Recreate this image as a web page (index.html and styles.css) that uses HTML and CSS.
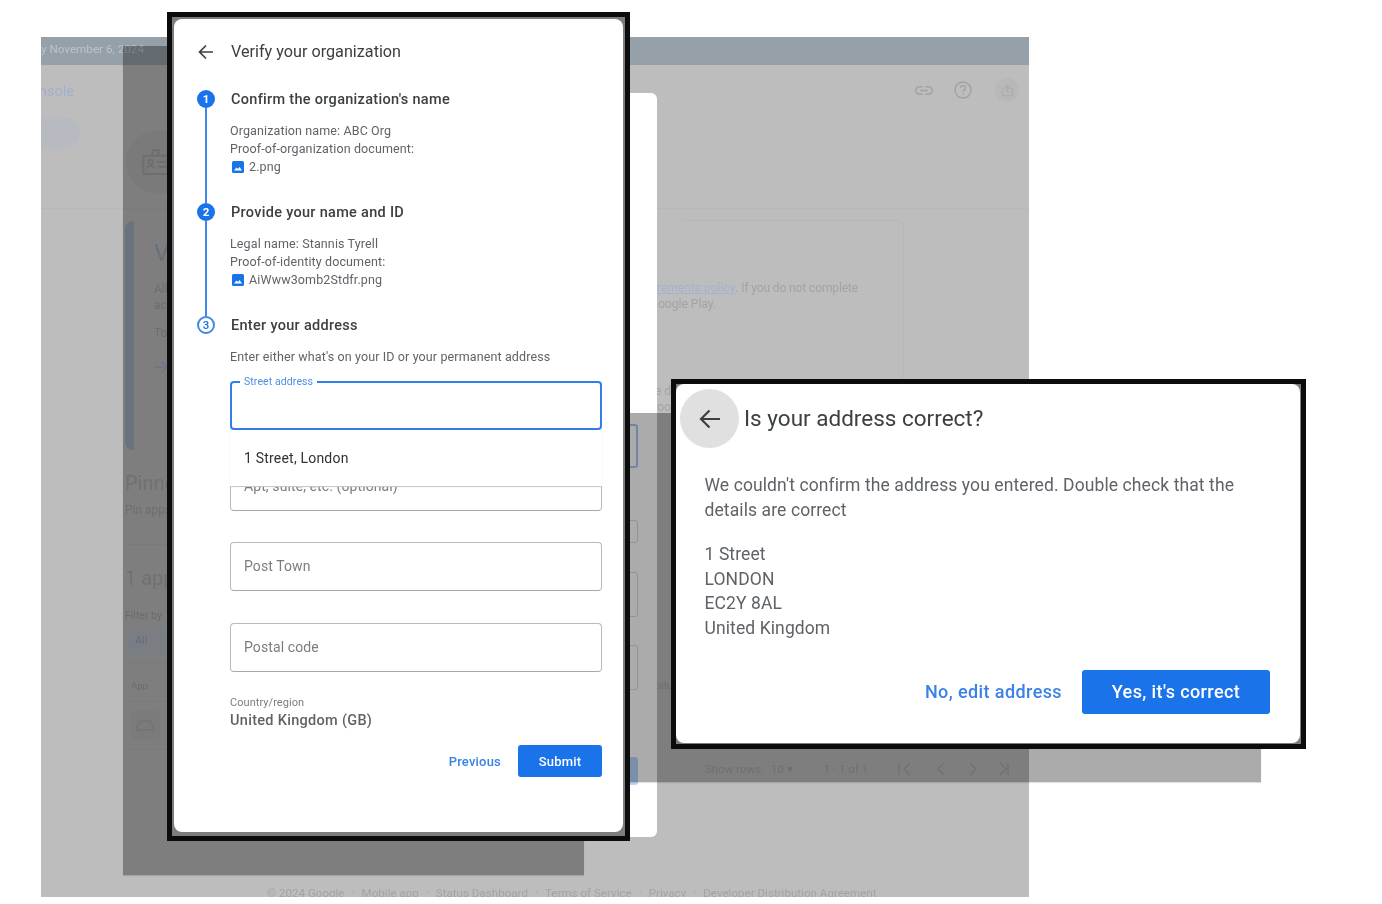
FILE: index.html
```html
<!DOCTYPE html>
<html lang="en">
<head>
<meta charset="utf-8">
<title>Verify your organization</title>
<link rel="stylesheet" href="styles.css">
</head>
<body>
<main class="stage">
  <section class="console">
    <div class="topbar"><span class="date">Verify by November 6, 2024</span></div>
    <div class="brand">Play Console</div>
    <div class="pill"></div>
    <div class="divider"></div>
    <div class="top-icons">
      <svg class="ti-link" viewBox="0 0 24 14" width="18" height="11"><path d="M10 2H6a5 5 0 0 0 0 10h4M14 2h4a5 5 0 0 1 0 10h-4M7 7h10" fill="none" stroke="#a2a2a2" stroke-width="2"/></svg>
      <svg class="ti-help" viewBox="0 0 18 18" width="18" height="18"><circle cx="9" cy="9" r="8" fill="none" stroke="#a2a2a2" stroke-width="1.4"/><path d="M6.6 7a2.4 2.4 0 1 1 3.6 2.1c-.8.5-1.2.9-1.2 1.9M9 12.6v1.2" fill="none" stroke="#a2a2a2" stroke-width="1.4"/></svg>
      <span class="ti-share"><svg viewBox="0 0 14 14" width="13" height="13"><path d="M1.5 4.500h11v8h-11zM7 9V1M5 3l2-2 2 2" fill="none" stroke="#adadad" stroke-width="1.3"/></svg></span>
    </div>
    <div class="org-avatar"><svg viewBox="0 0 28 30" width="27" height="30"><path d="M1.5 8.500h25v19h-25zM11 8.500V2.500h6v6M5 22c1-4 7-4 8 0M16 15h9M16 20h9" fill="none" stroke="#a4a4a4" stroke-width="2"/><circle cx="9" cy="15" r="2.4" fill="none" stroke="#a4a4a4" stroke-width="2"/></svg></div>
    <article class="notice">
      <h2 class="notice-title">Verify your organization</h2>
      <p class="notice-text">All organizations must verify</p>
      <p class="notice-text">accounts that they own</p>
      <p class="notice-text notice-to">To continue, verify</p>
      <svg class="notice-arrow" viewBox="0 0 14 12" width="14" height="12"><path d="M0 6h13M8 1l5 5-5 5" fill="none" stroke="#9fb0c8" stroke-width="1.3"/></svg>
    </article>
    <div class="policy"><p><a class="policy-link">Read the Play Console requirements policy</a><span>. If you do not complete</span></p><p class="policy-second">verification your apps may be removed from Google Play.</p></div>
    <div class="notice-right"></div>
    <div class="behind-text"><p>Complete the d</p><p>Proof of id roo</p></div>
    <h2 class="pinned clip">Pinned apps</h2>
    <p class="pinned-sub clip">Pin apps to your dashboard</p>
    <h2 class="apps clip">1 app</h2>
    <p class="filter clip">Filter by</p>
    <div class="chip">All</div>
    <p class="table-head">App</p>
    <div class="app-icon"><svg viewBox="0 0 20 12" width="20" height="12"><path d="M1 11c1-6 5-9 9-9s8 3 9 9zM5 3 3.500 0.500M15 3l1.500-2.500" fill="none" stroke="#a4a4a4" stroke-width="1"/></svg></div>
    <div class="rule rule-a"></div><div class="rule rule-b"></div><div class="rule rule-c"></div><div class="rule rule-d"></div>
    <span class="status-frag">Status</span>
    <nav class="pager">
      <span>Show rows:</span><span class="pager-count">10 ▾</span><span class="pager-range">1 - 1 of 1</span>
      <svg viewBox="0 0 112 14" width="112" height="14"><path d="M1 1v12M12 1 6 7l6 6M46 1l-6 6 6 6M72 1l6 6-6 6M102 1l6 6-6 6M110 1v12" fill="none" stroke="#a6a6a6" stroke-width="1.2"/></svg>
    </nav>
    <footer class="legal"><span>© 2024 Google</span><span>·</span><span>Mobile app</span><span>·</span><span>Status Dashboard</span><span>·</span><span>Terms of Service</span><span>·</span><span>Privacy</span><span>·</span><span>Developer Distribution Agreement</span></footer>
  </section>

  <div class="scrim scrim-left"></div>

  <section class="mid-dialog">
    <div class="ghost ghost-focus"></div>
    <div class="ghost ghost-a"></div>
    <div class="ghost ghost-b"></div>
    <div class="ghost ghost-c"></div>
    <div class="ghost-button"></div>
  </section>

  <div class="scrim scrim-right"></div>

  <section class="frame frame-verify">
    <div class="sheet sheet-verify">
      <header class="verify-head">
        <svg class="back" viewBox="0 0 16 16" width="16" height="16"><path d="M15 8H1.800M8 1.500 1.500 8 8 14.500" fill="none" stroke="#3c4043" stroke-width="1.700"/></svg>
        <h1 class="verify-title">Verify your organization</h1>
      </header>
      <div class="step">
        <div class="rail"><span class="num">1</span><span class="line"></span></div>
        <div class="step-body">
          <h3 class="step-title">Confirm the organization's name</h3>
          <p class="info">Organization name: ABC Org</p>
          <p class="info">Proof-of-organization document:</p>
          <p class="info file"><svg class="pic" viewBox="0 0 12 12" width="12" height="12"><rect width="12" height="12" rx="1.500" fill="#1a73e8"/><path d="M2 9.500 4.500 6.500 6 8 7.500 6 10 9.500z" fill="#fff"/></svg>2.png</p>
        </div>
      </div>
      <div class="step">
        <div class="rail"><span class="num">2</span><span class="line"></span></div>
        <div class="step-body">
          <h3 class="step-title">Provide your name and ID</h3>
          <p class="info">Legal name: Stannis Tyrell</p>
          <p class="info">Proof-of-identity document:</p>
          <p class="info file"><svg class="pic" viewBox="0 0 12 12" width="12" height="12"><rect width="12" height="12" rx="1.500" fill="#1a73e8"/><path d="M2 9.500 4.500 6.500 6 8 7.500 6 10 9.500z" fill="#fff"/></svg>AiWww3omb2Stdfr.png</p>
        </div>
      </div>
      <div class="step step-last">
        <div class="rail"><span class="num num-open">3</span></div>
        <div class="step-body">
          <h3 class="step-title">Enter your address</h3>
          <p class="info">Enter either what's on your ID or your permanent address</p>
          <div class="fields">
            <div class="field field-focus">
              <span class="float-label">Street address</span>
              <div class="suggest">1 Street, London</div>
            </div>
            <div class="field">Apt, suite, etc. (optional)</div>
            <div class="field">Post Town</div>
            <div class="field">Postal code</div>
          </div>
          <p class="country-label">Country/region</p>
          <p class="country">United Kingdom (GB)</p>
          <div class="verify-actions">
            <button class="btn-text" type="button">Previous</button>
            <button class="btn-fill" type="button">Submit</button>
          </div>
        </div>
      </div>
    </div>
  </section>

  <section class="frame frame-confirm">
    <div class="sheet sheet-confirm">
      <header class="confirm-head">
        <span class="back-round"><svg viewBox="0 0 22 20" width="22" height="20"><path d="M21 10H2.500M10.500 1.500 2 10l8.500 8.500" fill="none" stroke="#3c4043" stroke-width="2.200"/></svg></span>
        <h1 class="confirm-title">Is your address correct?</h1>
      </header>
      <div class="confirm-body">
        <p class="confirm-text">We couldn't confirm the address you entered. Double check that the details are correct</p>
        <address class="confirm-address">1 Street<br>LONDON<br>EC2Y 8AL<br>United Kingdom</address>
        <div class="confirm-actions">
          <button class="btn-text btn-large" type="button">No, edit address</button>
          <button class="btn-fill btn-fill-large" type="button">Yes, it's correct</button>
        </div>
      </div>
    </div>
  </section>
</main>
</body>
</html>
```

FILE: styles.css
```css
* { box-sizing: border-box; }
html, body { margin: 0; background: #fff; }
body { font-family: Roboto, "Liberation Sans", sans-serif; color: #3c4043; }
p, h1, h2, h3, address { margin: 0; font-style: normal; font-weight: 400; }
button { font-family: inherit; border: 0; cursor: pointer; }

.stage { position: relative; width: 1382px; height: 904px; overflow: hidden; background: #fff; filter: blur(.3px); }

/* Faded console behind the dialogs */
.console { position: absolute; left: 41px; top: 37px; width: 988px; height: 860px; overflow: hidden; background: #bdbdbd; color: #a3a3a3; }
.console > * { position: absolute; }
.clip { width: 42px; overflow: hidden; white-space: nowrap; }
.topbar { left: 0; top: 0; width: 100%; height: 28px; background: #95a0a8; }
.date { position: absolute; right: 885px; top: 5px; display: flex; white-space: nowrap; font-size: 11.700px; line-height: 14px; color: #b9c3ca; }
.brand { right: 955px; top: 46px; white-space: nowrap; font-size: 14.500px; line-height: 18px; color: #a0b0cc; }
.pill { left: -40px; top: 80px; width: 79px; height: 32px; border-radius: 16px; background: #b8bac1; }
.divider { left: 0; top: 171px; width: 100%; height: 1px; background: #b8b8b8; }
.top-icons { left: 874px; top: 41px; width: 104px; height: 24px; display: flex; align-items: center; }
.ti-link { margin-right: 21px; }
.ti-help { margin-right: 23px; }
.ti-share { width: 24px; height: 24px; border-radius: 50%; background: #b8b8b8; display: flex; align-items: center; justify-content: center; }
.org-avatar { left: 85px; top: 93px; width: 64px; height: 64px; border-radius: 50%; background: #b7b7b7; display: flex; align-items: center; justify-content: center; padding-right: 6px; }
.notice { left: 84px; top: 184px; width: 42px; height: 229px; overflow: hidden; border-radius: 8px 0 0 8px; border-left: 9px solid #9eacb9; padding: 19px 0 0 20px; }
.notice-title { font-size: 24px; line-height: 26px; color: #98a9ba; white-space: nowrap; }
.notice-text { margin-top: 0; font-size: 12px; line-height: 16px; white-space: nowrap; }
.notice-title + .notice-text { margin-top: 15px; }
.notice-to { margin-top: 12px; }
.notice-arrow { display: block; margin-top: 20px; }
.policy { left: 616px; top: 243px; width: 201px; overflow: hidden; font-size: 12px; line-height: 16px; white-space: nowrap; }
.policy p { display: flex; justify-content: flex-end; }
.policy-link { flex: none; color: #a3b2cf; text-decoration: underline; }
.policy span { flex: none; white-space: pre; letter-spacing: -.12px; }
.policy-second { padding-right: 142px; }
.notice-right { left: 640px; top: 183px; width: 223px; height: 230px; border: 1px solid #b7b7b7; border-left: 0; border-radius: 0 8px 0 0; }
.behind-text { left: 616px; top: 346px; width: 14px; overflow: hidden; font-size: 12px; line-height: 16px; white-space: nowrap; }
.behind-text p { display: flex; justify-content: flex-end; }
.pinned { left: 84px; top: 433px; font-size: 20px; line-height: 26px; color: #a8a8a8; }
.pinned-sub { left: 84px; top: 465px; font-size: 12px; line-height: 16px; }
.apps { left: 84px; top: 528px; font-size: 20px; line-height: 26px; color: #a8a8a8; }
.filter { left: 84px; top: 572px; font-size: 10.500px; line-height: 14px; color: #a0a0a0; }
.chip { left: 84px; top: 590px; width: 42px; height: 28px; background: #b7bcc4; padding-left: 10px; font-size: 11px; line-height: 28px; color: #8ea2c0; }
.table-head { left: 90px; top: 642px; font-size: 9.500px; line-height: 14px; color: #a0a0a0; }
.app-icon { left: 89px; top: 673px; width: 30px; height: 30px; border-radius: 5px; background: #b8b8b8; display: flex; align-items: center; justify-content: center; }
.rule { left: 84px; width: 100px; height: 1px; background: #b6b6b6; }
.rule-a { top: 507px; }
.rule-b { top: 625px; }
.rule-c { top: 664px; }
.rule-d { top: 712px; }
.status-frag { left: 608px; top: 642px; font-size: 10px; line-height: 14px; }
.pager { left: 664px; top: 724px; display: flex; align-items: center; font-size: 11.500px; line-height: 16px; white-space: nowrap; color: #a6a6a6; }
.pager-count { margin-left: 7px; }
.pager-range { margin-left: 31px; margin-right: 30px; }
.legal { left: 226px; top: 849px; display: flex; gap: 7px; white-space: nowrap; font-size: 11.600px; line-height: 14px; color: #a3a3a3; }

/* Dark overlays left by the pasted crops */
.scrim { position: absolute; background: rgba(0, 0, 0, .33); box-shadow: 0 1px 1px rgba(0, 0, 0, .12); }
.scrim-left { left: 123px; top: 46px; width: 461px; height: 829px; }
.scrim-right { left: 600px; top: 413px; width: 661px; height: 369px; }

.mid-dialog { position: absolute; left: 400px; top: 93px; width: 257px; height: 744px; background: #fff; border-radius: 0 6px 6px 0; padding: 331px 19px 0 0; display: flex; flex-direction: column; align-items: flex-end; }
.ghost { width: 40px; border: 1px solid #dcdcdc; border-radius: 3px; }
.ghost-focus { height: 44px; border: 2px solid #a9c8f5; }
.ghost-a { height: 23px; margin-top: 52px; }
.ghost-b { height: 45px; margin-top: 29px; }
.ghost-c { height: 45px; margin-top: 28px; }
.ghost-button { width: 40px; height: 28px; margin-top: 67px; border-radius: 3px; background: #b9d5fb; }

/* Pasted crops with a black outline */
.frame { position: absolute; border: 5px solid #0c0c0c; background: #7d7d7d; }
.frame-verify { left: 167px; top: 12px; width: 463px; height: 829px; padding: 2px 2px 4px 2px; }
.frame-confirm { left: 671px; top: 379px; width: 635px; height: 370px; padding: 0 1px 1px 0; }
.sheet { width: 100%; height: 100%; background: #fff; border-radius: 8px; }

.sheet-verify { padding: 21px 21px 0 23px; }
.verify-head { display: flex; align-items: center; height: 24px; margin-bottom: 26px; }
.back { margin-left: 1px; }
.verify-title { margin-left: 17px; font-size: 16.200px; line-height: 24px; color: #3c4043; white-space: nowrap; }
.step { display: grid; grid-template-columns: 18px 1fr; column-gap: 15px; height: 113px; }
.step-last { height: auto; }
.rail { display: flex; flex-direction: column; align-items: center; }
.num { flex: none; width: 18px; height: 18px; border-radius: 50%; background: #1a73e8; color: #fff; font-size: 11.500px; font-weight: 700; line-height: 18px; text-align: center; }
.num-open { background: #fff; border: 2px solid #3f88ea; color: #1a73e8; line-height: 14px; font-weight: 500; }
.line { flex: 1; width: 2px; background: #3f88ea; }
.step-title { margin-bottom: 13px; padding: 1px 0 0 1px; font-size: 14.500px; font-weight: 500; line-height: 18px; letter-spacing: .3px; color: #3c4043; white-space: nowrap; }
.info { font-size: 12.500px; line-height: 18px; letter-spacing: .12px; color: #5f6368; white-space: nowrap; }
.file { display: flex; align-items: center; }
.pic { margin: 0 5px 0 2px; }

.fields { margin-top: 15px; display: flex; flex-direction: column; gap: 31.500px; }
.field { position: relative; height: 49px; padding-left: 13px; border: 1px solid #bababa; border-bottom-color: #a8a8a8; border-radius: 4px; font-size: 14px; line-height: 47px; letter-spacing: .1px; color: #7a7d80; }
.field-focus { border: 2px solid #2f7fe9; }
.float-label { position: absolute; left: 8px; top: -8px; padding: 0 4px; background: #fff; font-size: 10.500px; line-height: 14px; letter-spacing: .1px; color: #4a8fe8; white-space: nowrap; }
.suggest { position: absolute; z-index: 2; left: -2px; right: -2px; top: 47px; height: 57px; padding-left: 14px; background: #fff; border-bottom: 1px solid #c9c9c9; font-size: 14px; line-height: 57px; letter-spacing: .2px; color: #2f3235; box-shadow: 0 0 1px rgba(0, 0, 0, .12); }
.country-label { margin-top: 24px; font-size: 11px; line-height: 14px; letter-spacing: .05px; color: #7a7d80; }
.country { margin-top: 2px; font-size: 14.500px; font-weight: 500; line-height: 18px; letter-spacing: .3px; color: #5f6368; }
.verify-actions { margin-top: 15.500px; display: flex; justify-content: flex-end; align-items: center; gap: 17px; }
.btn-text { padding: 0; background: none; color: #3a82e6; font-size: 13px; font-weight: 500; letter-spacing: .2px; }
.btn-fill { width: 84px; height: 32px; border-radius: 3px; background: #1a73e8; color: #fff; font-size: 13px; font-weight: 500; letter-spacing: .2px; }

.confirm-head { display: flex; align-items: center; padding: 5px 0 0 4px; }
.back-round { flex: none; width: 59px; height: 59px; border-radius: 50%; background: #e0e0e0; display: flex; align-items: center; justify-content: center; }
.confirm-title { margin: 0 0 2px 5px; font-size: 22.500px; line-height: 28px; color: #3c4043; white-space: nowrap; }
.confirm-body { padding: 25px 30px 0 28.500px; }
.confirm-text { width: 545px; font-size: 17.500px; line-height: 25px; letter-spacing: .1px; color: #5f6368; }
.confirm-address { margin-top: 19px; font-size: 17.500px; line-height: 24.700px; letter-spacing: .1px; color: #5f6368; }
.confirm-actions { margin-top: 29px; display: flex; justify-content: flex-end; align-items: center; gap: 20px; }
.btn-large { font-size: 18px; letter-spacing: .4px; }
.btn-fill-large { width: 188px; height: 44px; font-size: 18px; letter-spacing: .4px; }
```
